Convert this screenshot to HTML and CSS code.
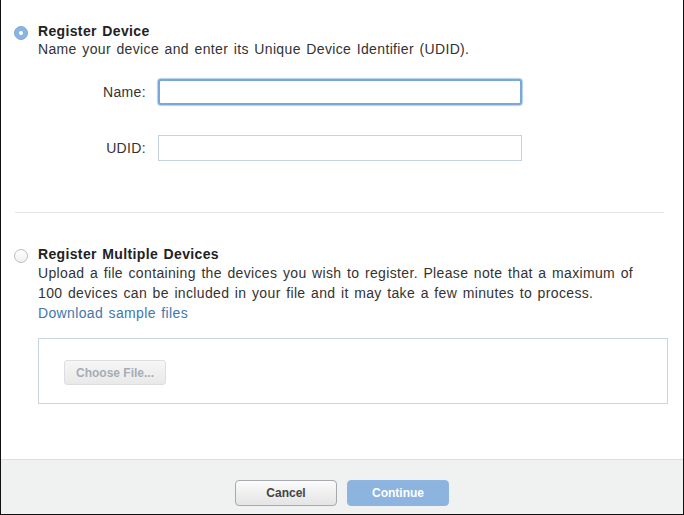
FILE: index.html
```html
<!DOCTYPE html>
<html>
<head>
<meta charset="utf-8">
<link rel="stylesheet" href="styles.css">
</head>
<body>
<div class="dialog">
  <div class="main">
    <section class="option first">
      <span class="radio checked"><span class="dot"></span></span>
      <div class="option-body">
        <div class="title">Register Device</div>
        <div class="desc">Name your device and enter its Unique Device Identifier (UDID).</div>
        <div class="form">
          <div class="field">
            <label class="label">Name:</label>
            <div class="input focused"></div>
          </div>
          <div class="field">
            <label class="label">UDID:</label>
            <div class="input"></div>
          </div>
        </div>
      </div>
    </section>
    <hr class="divider">
    <section class="option second">
      <span class="radio"></span>
      <div class="option-body">
        <div class="title">Register Multiple Devices</div>
        <p class="para">Upload a file containing the devices you wish to register. Please note that a maximum of<br>100 devices can be included in your file and it may take a few minutes to process.</p>
        <a class="link">Download sample files</a>
        <div class="upload-box">
          <span class="btn-file">Choose File...</span>
        </div>
      </div>
    </section>
  </div>
  <footer class="footer">
    <span class="btn cancel">Cancel</span>
    <span class="btn continue">Continue</span>
  </footer>
</div>
</body>
</html>
```
FILE: styles.css
```css
* { box-sizing: border-box; }
html, body { margin: 0; padding: 0; background: #fff; }
body {
  font-family: "Liberation Sans", Arial, sans-serif;
  font-size: 14px;
  color: #333;
}
.dialog {
  width: 684px;
  height: 515px;
  border-left: 1px solid #111;
  border-right: 1px solid #111;
  border-bottom: 1px solid #111;
  display: flex;
  flex-direction: column;
}
.main { flex: 1; }
.option {
  display: flex;
  align-items: flex-start;
  padding-left: 13px;
}
.option.first { padding-top: 22px; }
.radio {
  width: 14px;
  height: 14px;
  border-radius: 50%;
  border: 1px solid #b9bcc0;
  background: linear-gradient(#fff, #f0f0f0);
  margin-right: 10px;
  margin-top: 4px;
  flex: none;
  display: flex;
  align-items: center;
  justify-content: center;
}
.radio.checked {
  background: #8ab5e2;
  border-color: #7fa9d8;
}
.radio .dot {
  width: 4px;
  height: 4px;
  border-radius: 50%;
  background: #fff;
}
.option-body { flex: 1; }
.title, .desc, .para, .link, .label {
  letter-spacing: 0.35px;
  word-spacing: 1.3px;
}
.title {
  font-weight: bold;
  color: #222;
  line-height: 18px;
}
.desc { line-height: 18px; }
.form {
  margin-top: 21px;
  display: flex;
  flex-direction: column;
  gap: 30px;
}
.field {
  display: flex;
  align-items: center;
}
.label {
  width: 108px;
  text-align: right;
  margin-right: 12px;
  color: #333;
}
.input {
  width: 364px;
  height: 26px;
  border: 1px solid #c5d3e0;
  background: #fff;
}
.input.focused {
  border: 2px solid #79a7da;
  border-radius: 3px;
  box-shadow: 0 0 1px 1px #b5cfec;
}
.divider {
  border: none;
  border-top: 1px solid #e3e3e3;
  margin: 51px 19px 32px 14px;
  height: 0;
}
.para {
  margin: 0;
  line-height: 20px;
}
.link {
  display: block;
  color: #4277b0;
  line-height: 20px;
}
.upload-box {
  margin-top: 15px;
  margin-right: 15px;
  height: 66px;
  border: 1px solid #c8d5e0;
  padding: 21px 0 0 25px;
}
.btn-file {
  display: inline-flex;
  align-items: center;
  justify-content: center;
  width: 102px;
  height: 25px;
  border: 1px solid #dcdfe2;
  border-radius: 3px;
  background: linear-gradient(#f6f6f6, #e9e9e9);
  color: #a6adb4;
  font-size: 12px;
  font-weight: bold;
}
.footer {
  height: 55px;
  border-top: 1px solid #dcdddd;
  background: #f0f1f1;
  display: flex;
  justify-content: center;
  align-items: flex-start;
  gap: 10px;
  padding-top: 20px;
}
.btn {
  display: inline-flex;
  align-items: center;
  justify-content: center;
  width: 102px;
  height: 26px;
  border-radius: 4px;
  font-size: 12px;
  font-weight: bold;
}
.cancel {
  border: 1px solid #a6a9ad;
  background: linear-gradient(#fbfbfb, #e4e4e4);
  color: #444;
}
.continue {
  border: 1px solid #8fb6e0;
  background: #8cb4df;
  color: #fff;
}
```
